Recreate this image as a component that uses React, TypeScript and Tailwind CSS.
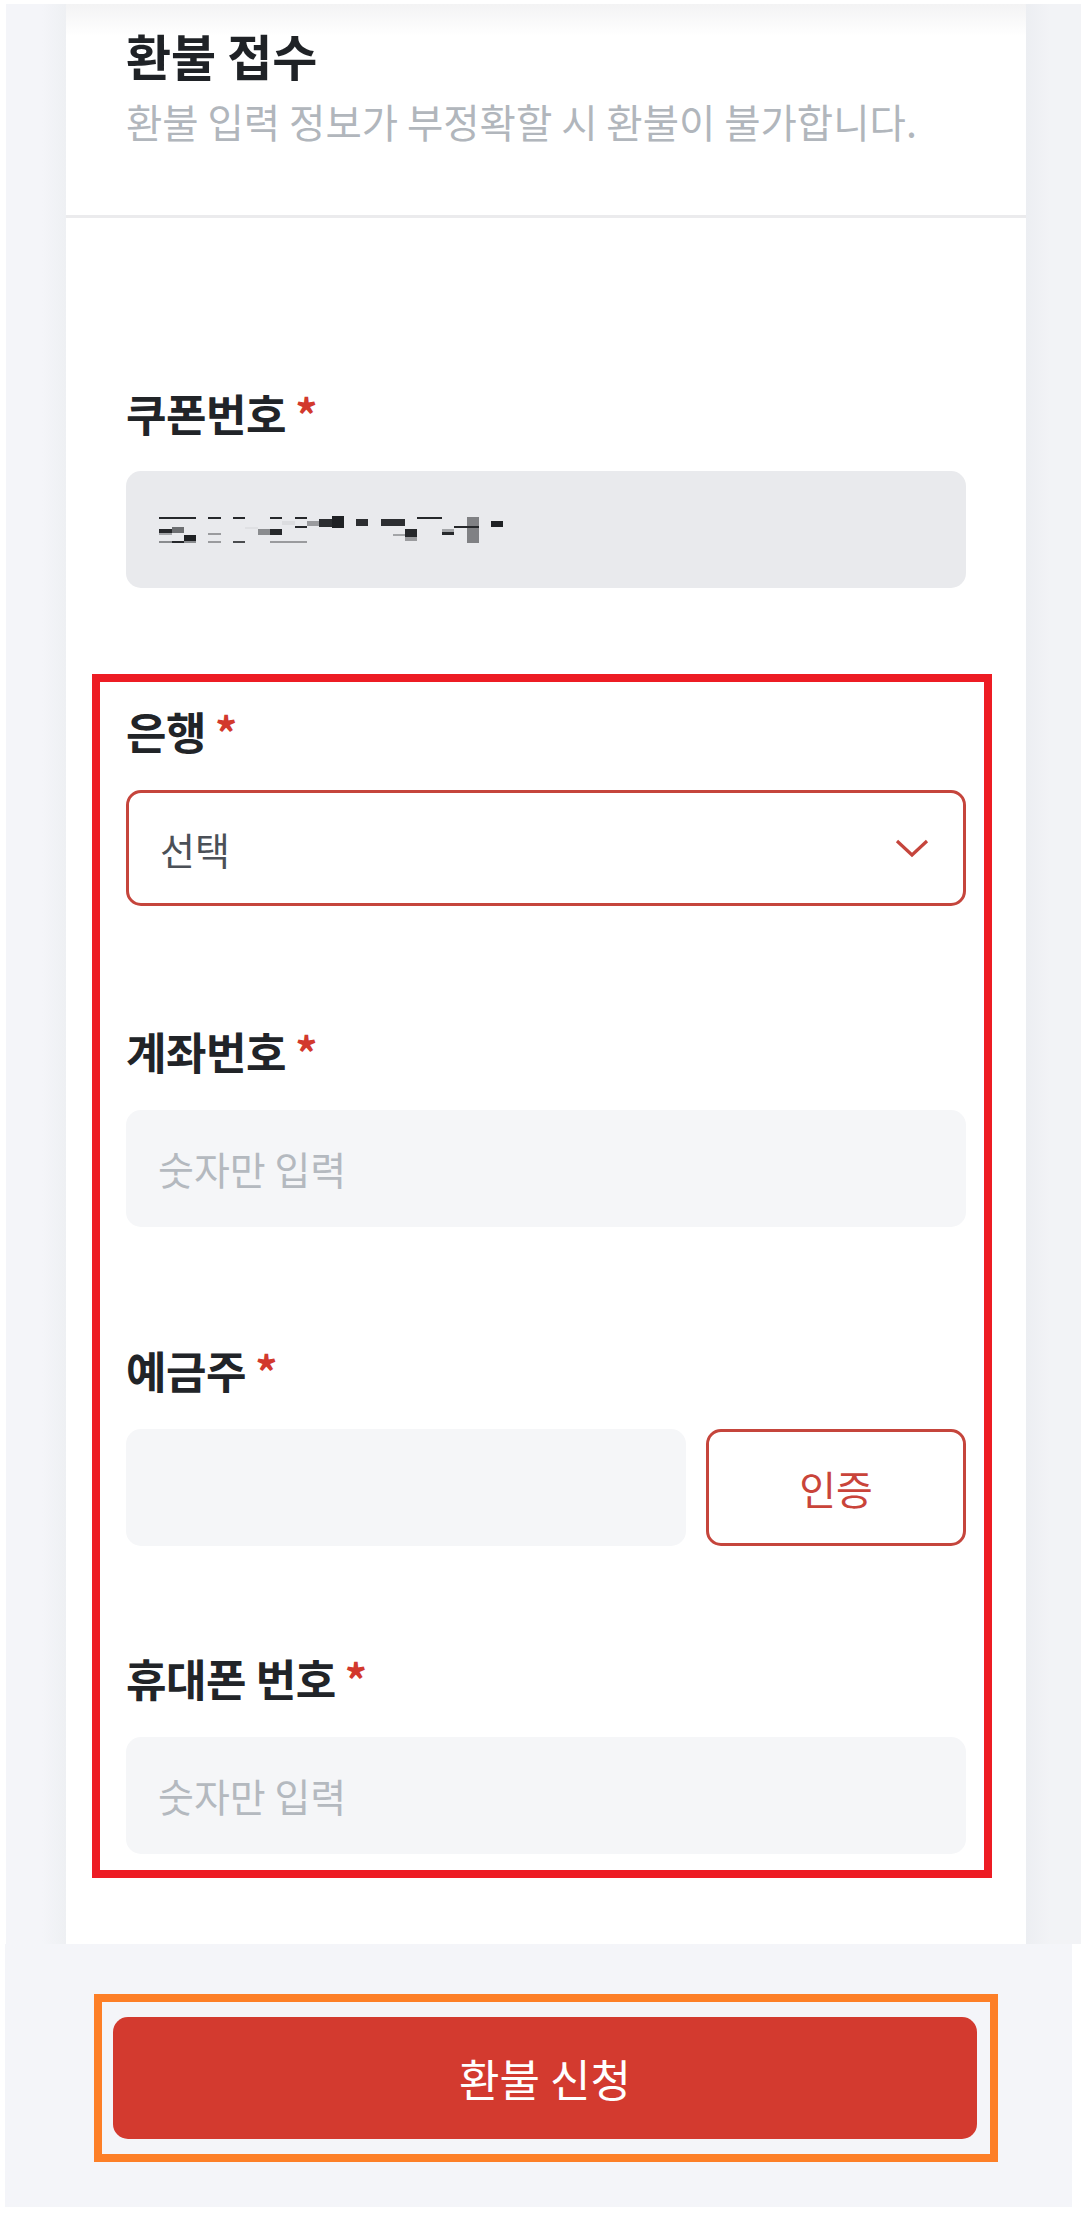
import React from 'react';

const font = "font-['Noto_Sans_CJK_KR','Noto_Sans',sans-serif]";

// pixelated redaction of the coupon number
const mosaic: [number, number, number, number, string][] = [
  [1, 1, 37, 2, '#26282b'],
  [50, 1, 13, 2, '#26282b'],
  [75, 1, 12, 2, '#26282b'],
  [112, 1, 12, 2, '#26282b'],
  [137, 1, 12, 2, '#26282b'],
  [259, 1, 25, 2, '#26282b'],
  [124, 5, 13, 4, '#dcdde0'],
  [149, 5, 12, 5, '#9a9b9e'],
  [161, 3, 13, 8, '#2c2e31'],
  [174, 0, 12, 12, '#1f2124'],
  [198, 3, 12, 7, '#2c2e31'],
  [223, 3, 24, 7, '#2c2e31'],
  [309, 1, 12, 26, '#808184'],
  [333, 5, 12, 6, '#1f2124'],
  [1, 13, 13, 4, '#26282b'],
  [14, 11, 12, 6, '#6d6f72'],
  [1, 17, 13, 2, '#a3a5a8'],
  [26, 19, 12, 6, '#1f2124'],
  [1, 25, 13, 2, '#8a8c8f'],
  [14, 25, 12, 2, '#26282b'],
  [26, 25, 12, 2, '#8a8c8f'],
  [50, 17, 13, 2, '#9a9b9e'],
  [50, 25, 13, 2, '#9a9b9e'],
  [75, 25, 12, 2, '#4a4c4f'],
  [87, 11, 13, 2, '#dfe0e3'],
  [100, 13, 12, 6, '#8a8c8f'],
  [112, 13, 12, 6, '#26282b'],
  [112, 25, 37, 2, '#9a9b9e'],
  [137, 10, 12, 2, '#26282b'],
  [235, 18, 12, 2, '#a3a5a8'],
  [247, 13, 12, 8, '#26282b'],
  [247, 21, 12, 4, '#9a9b9e'],
  [284, 13, 12, 3, '#a3a5a8'],
  [284, 16, 12, 3, '#26282b'],
  [296, 10, 25, 2, '#26282b'],
];

function Label({ text }: { text: string }) {
  return (
    <div className="flex items-start h-[50px] leading-[50px]">
      <span className="text-[44px] font-bold text-[#212428] tracking-[-0.01em]">{text}</span>
      <span className="ml-[9px] text-[44px] leading-[50px] font-bold text-[#d2392d]">*</span>
    </div>
  );
}

function TextInput({ placeholder, className = '' }: { placeholder?: string; className?: string }) {
  return (
    <div
      className={`h-[117px] rounded-[15px] bg-[#f5f6f8] flex items-center pl-[32px] text-[39px] text-[#b4b9bf] ${className}`}
    >
      {placeholder}
    </div>
  );
}

export default function App() {
  return (
    <div className={`w-[1081px] h-[2215px] bg-white pt-[4px] ${font}`}>
      <div className="ml-[6px] flex bg-[#f3f4f8]">
        <div className="w-[60px] bg-[linear-gradient(to_right,#f4f5f9_60%,#eef0f3)]" />

        {/* card */}
        <div className="w-[960px] bg-white">
          <div className="pt-[23px] pb-[72px] pl-[60px] bg-[linear-gradient(to_bottom,#f3f3f4,#ffffff_32px)]">
            <h1 className="text-[49px] leading-[56px] font-bold text-[#1f2226]">환불 접수</h1>
            <p className="mt-[16px] text-[39.5px] leading-[44px] text-[#b1b6bc]">
              환불 입력 정보가 부정확할 시 환불이 불가합니다.
            </p>
          </div>
          <div className="h-[3px] bg-[#ebebed]" />

          <div className="pt-[170px] px-[60px]">
            <Label text="쿠폰번호" />
            <div className="mt-[33px] h-[117px] rounded-[15px] bg-[#e9eaed] flex items-center pl-[32px]">
              <svg width="346" height="28" viewBox="0 0 346 28" className="mt-[1px]">
                {mosaic.map(([x, y, w, h, c], i) => (
                  <rect key={i} x={x} y={y} width={w} height={h} fill={c} />
                ))}
              </svg>
            </div>
          </div>

          <div className="mt-[86px] ml-[26px] w-[900px] border-[8px] border-[#ed1c24] pt-[24px] pb-[16px] pl-[26px] pr-[18px]">
            <Label text="은행" />
            <div className="mt-[34px] h-[116px] rounded-[15px] border-[3px] border-[#c5453c] bg-white flex items-center justify-between pl-[31px] pr-[34px]">
              <span className="text-[38px] text-[#4b5057]">선택</span>
              <svg width="34" height="19" viewBox="0 0 34 19" fill="none">
                <polyline points="2,2 17,16 32,2" stroke="#c5453c" strokeWidth="3.2" />
              </svg>
            </div>

            <div className="mt-[120px]">
              <Label text="계좌번호" />
            </div>
            <TextInput placeholder="숫자만 입력" className="mt-[34px]" />

            <div className="mt-[118px]">
              <Label text="예금주" />
            </div>
            <div className="mt-[34px] flex gap-[20px]">
              <TextInput className="w-[560px]" />
              <button className="w-[260px] h-[117px] rounded-[15px] border-[3px] border-[#c5453c] bg-white text-[40px] text-[#c9443a]">
                인증
              </button>
            </div>

            <div className="mt-[107px]">
              <Label text="휴대폰 번호" />
            </div>
            <TextInput placeholder="숫자만 입력" className="mt-[34px]" />
          </div>
          <div className="h-[66px]" />
        </div>

        <div className="flex-1 bg-[linear-gradient(to_right,#eceef2,#f2f3f6_45%)]" />
      </div>

      {/* bottom bar */}
      <div className="ml-[5px] w-[1067px] h-[263px] bg-[#f4f5f9] pt-[50px]">
        <div className="ml-[89px] w-[904px] border-[8px] border-[#fd7f27] pt-[15px] pb-[15px] pl-[11px] pr-[13px]">
          <button className="w-full h-[122px] rounded-[15px] bg-[#d33a2f] text-white text-[44px]">
            환불 신청
          </button>
        </div>
      </div>
    </div>
  );
}
